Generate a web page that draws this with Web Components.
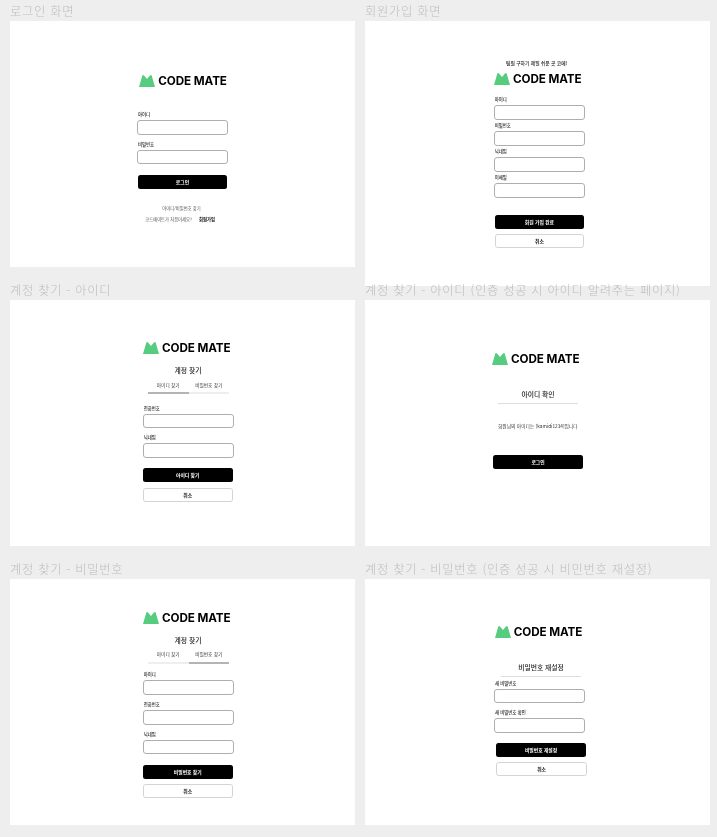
<!DOCTYPE html>
<html lang="ko">
<head>
<meta charset="utf-8">
<title>CODE MATE</title>
<style>
  html, body { margin: 0; background: #eeeeee; }
  body { font-family: "Inter", "Noto Sans CJK KR", sans-serif; }
  #canvas { display: flex; gap: 10px; padding-left: 10px; width: 717px; height: 837px; box-sizing: border-box; overflow: hidden; }
  .column { display: flex; flex-direction: column; }
</style>
</head>
<body>
<template id="board_template">
  <style>
    :host { display: block; }
    .title {
      height: 21px; padding-top: 3px; box-sizing: border-box;
      font: 300 12.3px/16px "Noto Sans CJK KR", sans-serif; letter-spacing: .7px;
      color: #bdbdbd; white-space: nowrap; position: relative; filter: blur(.3px);
    }
    .sheet { background: #fff; box-sizing: border-box; }
    .inner { display: flex; flex-direction: column; align-items: flex-start; filter: blur(.3px); }
  </style>
  <div class="title"></div>
  <div class="sheet"><div class="inner"><slot></slot></div></div>
</template>

<template id="logo_template">
  <style>
    :host { display: flex; align-items: center; height: 12px; gap: 3px; }
    svg { display: block; width: 16px; height: 12px; flex: none; }
    span { font: 700 11.7px/12px "Inter", sans-serif; color: #000; white-space: nowrap; letter-spacing: -0.1px; }
  </style>
  <svg viewBox="0 0 16 12"><path fill="#56cc7f" d="M0 12 L3.4 .3 L4.8 .3 L8 4 L11.2 .3 L12.6 .3 L16 12 Z"/></svg>
  <span>CODE MATE</span>
</template>

<template id="field_template">
  <style>
    :host { display: block; width: 90.5px; }
    label { display: block; font: 500 4.4px/7px "Noto Sans CJK KR", sans-serif; color: #222; margin: 0 0 2px .7px; white-space: nowrap; }
    input { display: block; box-sizing: border-box; width: 100%; height: 14.5px; margin: 0; padding: 0; border: 1px solid #aeaeae; border-radius: 3px; background: #fff; outline: 0; }
  </style>
  <label></label>
  <input type="text">
</template>

<template id="button_template">
  <style>
    :host { display: flex; align-items: center; justify-content: center; box-sizing: border-box; width: 89.5px; height: 14px; padding-bottom: 1px; border-radius: 2.5px; background: #000; color: #fff; font: 700 4.8px/7px "Noto Sans CJK KR", sans-serif; }
    :host([variant="line"]) { background: #fff; color: #111; border: 1px solid #d4d4d4; }
  </style>
  <slot></slot>
</template>

<template id="tabs_template">
  <style>
    :host { display: grid; grid-template-columns: 1fr 1fr; width: 81px; font: 400 4.7px/7px "Noto Sans CJK KR", sans-serif; color: #333; text-align: center; }
    div { padding: 0 0 3.5px; border-bottom: 2px solid #eeeeee; white-space: nowrap; }
    div.on { border-bottom-color: #b4b4b4; }
  </style>
  <div class="first"></div>
  <div class="second"></div>
</template>

<template id="heading_template">
  <style>
    :host { display: block; width: 80px; font: 500 6.8px/10px "Noto Sans CJK KR", sans-serif; color: #222; text-align: center; white-space: nowrap; }
    :host([ruled]) { border-bottom: 1px solid #dddddd; padding-bottom: 3.6px; }
  </style>
  <slot></slot>
</template>

<template id="note_template">
  <style>
    :host { display: block; font: 400 4.3px/7px "Noto Sans CJK KR", sans-serif; color: #555; white-space: nowrap; }
    ::slotted(b) { font-size: 4.3px; font-weight: 700; color: #000; margin-left: 7px; }
  </style>
  <slot></slot>
</template>

<div id="canvas">
  <div class="column">
    <auth-board heading="로그인 화면" size="345 245.5" offset="127.3 54.3">
      <code-logo style="margin-left:2px"></code-logo>
      <form-field label="아이디" style="margin-top:24px"></form-field>
      <form-field label="비밀번호" style="margin-top:5.8px"></form-field>
      <auth-button style="margin-top:11px;margin-left:.4px">로그인</auth-button>
      <small-note style="margin-top:16px;margin-left:25px">아이디/비밀번호 찾기</small-note>
      <small-note style="margin-top:4px;margin-left:8px">코드메이트가 처음이세요?<b>회원가입</b></small-note>
    </auth-board>
    <auth-board heading="계정 찾기 - 아이디" size="345 246" offset="133 42" style="margin-top:12.5px">
      <code-logo></code-logo>
      <section-heading style="margin-top:11px;margin-left:5px">계정 찾기</section-heading>
      <find-tabs first="아이디 찾기" second="비밀번호 찾기" active="first" style="margin-top:6.8px;margin-left:5px"></find-tabs>
      <form-field label="전화번호" style="margin-top:10.5px"></form-field>
      <form-field label="닉네임" style="margin-top:6px"></form-field>
      <auth-button style="margin-top:10.7px">아이디 찾기</auth-button>
      <auth-button variant="line" style="margin-top:5.5px">취소</auth-button>
    </auth-board>
    <auth-board heading="계정 찾기 - 비밀번호" size="345 246" offset="133 33" style="margin-top:12px">
      <code-logo></code-logo>
      <section-heading style="margin-top:10.7px;margin-left:5px">계정 찾기</section-heading>
      <find-tabs first="아이디 찾기" second="비밀번호 찾기" active="second" style="margin-top:6.8px;margin-left:5px"></find-tabs>
      <form-field label="아이디" style="margin-top:7.5px"></form-field>
      <form-field label="전화번호" style="margin-top:6.2px"></form-field>
      <form-field label="닉네임" style="margin-top:6.2px"></form-field>
      <auth-button style="margin-top:10.6px">비밀번호 찾기</auth-button>
      <auth-button variant="line" style="margin-top:5.3px">취소</auth-button>
    </auth-board>
  </div>
  <div class="column">
    <auth-board heading="회원가입 화면" size="345 265" offset="129 37.8">
      <small-note style="margin-left:12px;color:#222;font-size:4.8px;font-weight:500">팀원 구하기 제일 쉬운 곳 코메!</small-note>
      <code-logo style="margin-top:6.9px"></code-logo>
      <form-field label="아이디" style="margin-top:11.8px"></form-field>
      <form-field label="비밀번호" style="margin-top:2.5px"></form-field>
      <form-field label="닉네임" style="margin-top:2.5px"></form-field>
      <form-field label="이메일" style="margin-top:2.5px"></form-field>
      <auth-button style="margin-top:16.7px;margin-left:.7px">회원 가입 완료</auth-button>
      <auth-button variant="line" style="margin-top:5.6px;margin-left:.7px">취소</auth-button>
    </auth-board>
    <auth-board heading="계정 찾기 - 아이디 (인증 성공 시 아이디 알려주는 페이지)" size="345 246" offset="127 52.7" style="margin-top:-7px">
      <code-logo></code-logo>
      <section-heading ruled style="margin-top:24.3px;margin-left:6px">아이디 확인</section-heading>
      <small-note style="margin-top:18.7px;margin-left:6px;color:#333;font-size:4.75px">회원님의 아이디는 [kamidi1234]입니다</small-note>
      <auth-button style="margin-top:25.8px;margin-left:1.3px">로그인</auth-button>
    </auth-board>
    <auth-board heading="계정 찾기 - 비밀번호 (인증 성공 시 비민번호 재설정)" size="345 246" offset="129.3 47" style="margin-top:12px">
      <code-logo style="margin-left:.4px"></code-logo>
      <section-heading ruled style="margin-top:24px;margin-left:6.7px">비밀번호 재설정</section-heading>
      <form-field label="새 비밀번호" style="margin-top:3.3px"></form-field>
      <form-field label="새 비밀번호 확인" style="margin-top:6px"></form-field>
      <auth-button style="margin-top:10px;margin-left:2px">비밀번호 재설정</auth-button>
      <auth-button variant="line" style="margin-top:5.3px;margin-left:2px;width:90.5px">취소</auth-button>
    </auth-board>
  </div>
</div>

<script>
/*
 * Small helper, every element below clones its own template in an open root
 */
class TemplateElement extends HTMLElement {
  constructor(pTemplateId) {
    super();
    this.attachShadow({mode: 'open'});
    this.shadowRoot.appendChild(document.getElementById(pTemplateId).content.cloneNode(true));
  }
}

class AuthBoard extends TemplateElement {
  constructor() { super('board_template'); }
  connectedCallback() {
    const [width, height] = this.getAttribute('size').split(' ');
    const [left, top] = this.getAttribute('offset').split(' ');
    const sheet = this.shadowRoot.querySelector('.sheet');
    this.shadowRoot.querySelector('.title').textContent = this.getAttribute('heading');
    sheet.style.width = width + 'px';
    sheet.style.height = height + 'px';
    sheet.style.padding = top + 'px 0 0 ' + left + 'px';
  }
}

class CodeLogo extends TemplateElement {
  constructor() { super('logo_template'); }
}

class FormField extends TemplateElement {
  constructor() { super('field_template'); }
  connectedCallback() {
    this.shadowRoot.querySelector('label').textContent = this.getAttribute('label');
  }
}

class AuthButton extends TemplateElement {
  constructor() { super('button_template'); }
}

class FindTabs extends TemplateElement {
  constructor() { super('tabs_template'); }
  connectedCallback() {
    const first = this.shadowRoot.querySelector('.first');
    const second = this.shadowRoot.querySelector('.second');
    first.textContent = this.getAttribute('first');
    second.textContent = this.getAttribute('second');
    (this.getAttribute('active') === 'first' ? first : second).classList.add('on');
  }
}

class SectionHeading extends TemplateElement {
  constructor() { super('heading_template'); }
}

class SmallNote extends TemplateElement {
  constructor() { super('note_template'); }
}

customElements.define('auth-board', AuthBoard);
customElements.define('code-logo', CodeLogo);
customElements.define('form-field', FormField);
customElements.define('auth-button', AuthButton);
customElements.define('find-tabs', FindTabs);
customElements.define('section-heading', SectionHeading);
customElements.define('small-note', SmallNote);
</script>
</body>
</html>
